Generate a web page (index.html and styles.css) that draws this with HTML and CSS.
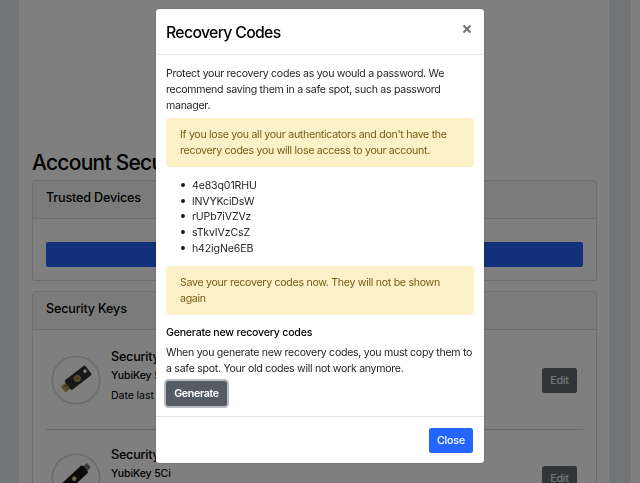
FILE: index.html
```html
<!DOCTYPE html>
<html lang="en">
<head>
<meta charset="utf-8">
<title>Account Security</title>
<link rel="stylesheet" href="styles.css">
</head>
<body>
<div class="page">
  <main class="content">
    <h1>Account Security</h1>
    <section class="card devices">
      <h2 class="card-header">Trusted Devices</h2>
      <div class="card-body"><div class="btn-block"></div></div>
    </section>
    <section class="card keys">
      <h2 class="card-header">Security Keys</h2>
      <div class="key-row">
        <svg class="key-icon" viewBox="0 0 50 50">
          <circle cx="25" cy="25" r="23.8" fill="none" stroke="#d6d6d6" stroke-width="1.6"/>
          <g transform="translate(25.5 24) rotate(-38)">
            <rect x="-17" y="-3.8" width="8" height="7.6" fill="#b8a060"/>
            <path d="M-15 -1.5h4M-15 1.5h4" stroke="#635530" stroke-width=".8"/>
            <rect x="-11" y="-6" width="26" height="12" rx="1.5" fill="#303033"/>
            <circle cx="1" cy="0" r="3.5" fill="#b59a52"/>
            <path d="M0 -1.5v3M2 -1.5v3" stroke="#5c4c26" stroke-width=".8"/>
            <circle cx="11.5" cy="-1" r="1.8" fill="#fff"/>
          </g>
        </svg>
        <div class="key-info"><h3>Security Key</h3><h4>YubiKey 5 NFC</h4><p>Date last used</p></div>
        <span class="btn btn-edit">Edit</span>
      </div>
      <div class="key-row">
        <svg class="key-icon" viewBox="0 0 50 50">
          <circle cx="25" cy="25" r="23.8" fill="none" stroke="#d6d6d6" stroke-width="1.6"/>
          <g transform="translate(24 25) rotate(-43)">
            <rect x="10" y="-3" width="9" height="6" rx="1" fill="#77777a"/>
            <rect x="-15" y="-5" width="29" height="10" rx="2" fill="#161618"/>
            <circle cx="-1" cy="0" r="2.5" fill="#b59a52"/><circle cx="-1" cy="0" r="1.2" fill="#fff"/>
          </g>
        </svg>
        <div class="key-info"><h3>Security Key</h3><h4>YubiKey 5Ci</h4><p>Date last used</p></div>
        <span class="btn btn-edit">Edit</span>
      </div>
    </section>
  </main>
  <aside class="side"></aside>
</div>
<div class="backdrop">
  <div class="modal" role="dialog">
    <header class="modal-header">
      <h2>Recovery Codes</h2>
      <svg class="dismiss" viewBox="0 0 10 10"><path d="M1.5 1.5l7 7M8.5 1.5l-7 7" stroke="#707070" stroke-width="2"/></svg>
    </header>
    <div class="modal-body">
      <p class="intro">Protect your recovery codes as you would a password. We<br>recommend saving them in a safe spot, such as password<br>manager.</p>
      <div class="alert">If you lose you all your authenticators and don't have the<br>recovery codes you will lose access to your account.</div>
      <ul>
        <li>4e83q01RHU</li>
        <li>lNVYKciDsW</li>
        <li>rUPb7iVZVz</li>
        <li>sTkvIVzCsZ</li>
        <li>h42igNe6EB</li>
      </ul>
      <div class="alert">Save your recovery codes now. They will not be shown<br>again</div>
      <h3>Generate new recovery codes</h3>
      <p class="note">When you generate new recovery codes, you must copy them to<br>a safe spot. Your old codes will not work anymore.</p>
      <button class="btn btn-generate">Generate</button>
    </div>
    <footer class="modal-footer"><button class="btn btn-close">Close</button></footer>
  </div>
</div>
</body>
</html>
```
FILE: styles.css
```css
* { box-sizing: border-box; }
html, body { height: 100%; overflow: hidden; }
body {
  margin: 0;
  background: #fff;
  color: #000;
  font: 10.6px/15.8px Inter, "Liberation Sans", sans-serif;
  letter-spacing: -.29px;
  white-space: nowrap;
}
h1, h2, h3, h4, p, ul { margin: 0; padding: 0; font-weight: 500; }
p, ul { font-weight: 400; }

.page {
  display: flex;
  width: 631px;
  height: 483px;
  padding-left: 19px;
  background: #e5e8eb;
  overflow: hidden;
}
.content {
  width: 590px;
  height: 600px;
  padding: 148px 12px 0 13px;
  background: #fff;
}
h1 { height: 32px; font-size: 21px; line-height: 30px; letter-spacing: -.75px; }
.card {
  width: 564.5px;
  margin-bottom: 10px;
  border: 1px solid #dadada;
  border-radius: 3px;
}
.devices { height: 101px; }
.keys { height: 300px; }
.card-header {
  height: 38px;
  padding-left: 13px;
  border-bottom: 1px solid #dadada;
  background: #f7f7f7;
  font-size: 12.6px;
  line-height: 33px;
  letter-spacing: -.18px;
}
.card-body { padding: 23px 13px 0; }
.btn-block { height: 25px; border-radius: 2px; background: #2563f5; }
.key-row {
  display: flex;
  align-items: center;
  height: 100px;
  margin: 0 13px;
  padding: 0 5px;
  border-bottom: 1px solid #d4d4d4;
}
.key-row + .key-row { height: 97px; }
.key-icon { width: 50px; height: 50px; }
.key-info { flex: 1; margin-left: 10px; padding-bottom: 8px; }
.key-info h3 { font-size: 12.6px; line-height: 19px; letter-spacing: -.22px; }
.key-info h4 { font-size: 10.5px; line-height: 20px; letter-spacing: -.1px; }
.key-info p { line-height: 19px; letter-spacing: -.1px; }

.btn {
  display: block;
  height: 25px;
  padding: 0;
  border: 0;
  border-radius: 2.5px;
  color: #fff;
  font: 500 10.7px/25px Inter, "Liberation Sans", sans-serif;
  letter-spacing: -.2px;
  text-align: center;
}
.btn-edit { width: 35px; margin: 1px .5px 0 0; background: #646a70; color: #e8e8e8; }

.backdrop {
  position: fixed;
  inset: 0;
  display: flex;
  align-items: flex-start;
  padding: 9px 0 0 156px;
  background: rgba(0, 0, 0, .5);
}
.modal {
  width: 327.5px;
  height: 454px;
  border-radius: 3px;
  background: #fff;
  box-shadow: 0 0 1px rgba(0, 0, 0, .6);
}
.modal-header {
  display: flex;
  justify-content: space-between;
  height: 46px;
  padding: 0 11.5px 0 10px;
  border-bottom: 1px solid #e2e4e7;
}
.modal-header h2 { font-size: 15.8px; line-height: 47px; letter-spacing: -.68px; }
.dismiss { width: 10px; height: 10px; margin-top: 15px; }
.modal-body { height: 361px; padding: 11px 10px 0; color: #1c2024; }
.intro { margin-bottom: 5px; }
.alert {
  height: 49px;
  padding: 9px 14px;
  border-radius: 3px;
  background: #fdf1c9;
  color: #775b10;
}
.modal-body ul {
  height: 79px;
  margin: 10.6px 0 9.4px;
  padding-left: 26px;
  line-height: 15.7px;
  letter-spacing: -.15px;
  list-style: none;
}
.modal-body li::before {
  content: "";
  display: inline-block;
  width: 4px;
  height: 4px;
  margin: 0 7px 2px -11px;
  border-radius: 50%;
  background: #1c2024;
}
.modal-body h3 { margin: 9px 0 3.5px; font-size: 10.6px; line-height: 17px; letter-spacing: -.22px; color: #000; }
.btn-generate {
  width: 61px;
  margin-top: 4.5px;
  background: #545b62;
  font-weight: 600;
  letter-spacing: -.35px;
  box-shadow: 0 0 0 2px #b9bdc2;
}
.modal-footer {
  display: flex;
  justify-content: flex-end;
  padding: 11px 10.5px;
  border-top: 1px solid #e2e4e7;
}
.btn-close { width: 44px; background: #2466fd; }
```
